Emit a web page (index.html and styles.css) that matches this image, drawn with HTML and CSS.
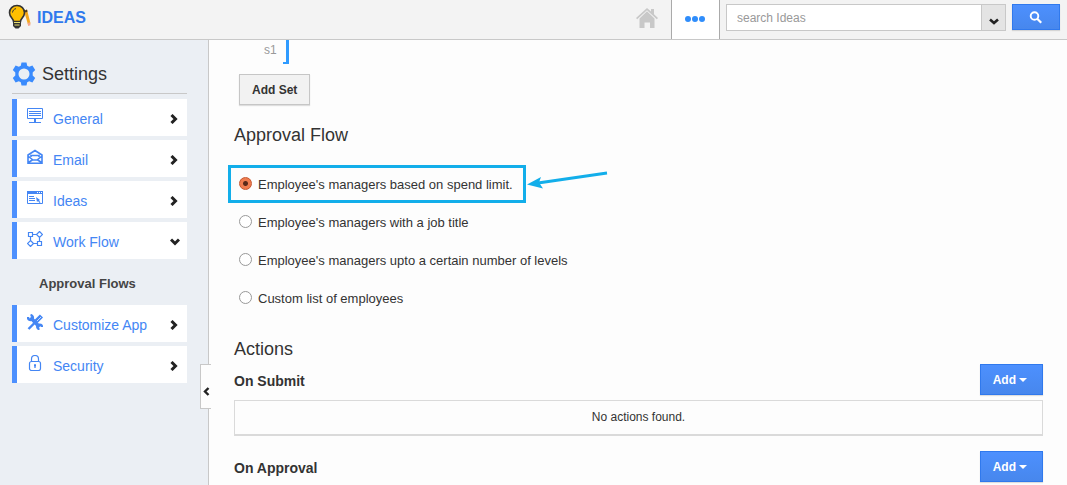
FILE: index.html
```html
<!DOCTYPE html>
<html lang="en">
<head>
    <meta charset="UTF-8">
    <meta name="viewport" content="width=device-width, initial-scale=1.0">
    <title>Ideas - Approval Flows</title>
    <link rel="stylesheet" href="styles.css">
</head>
<body>
    <header class="topbar">
        <a class="brand" href="#">
            <svg class="brand-icon" width="23" height="26" viewBox="0 0 23 26" aria-hidden="true">
                <path d="M16 7l3-1.500 3.500 14-2.500 1z" fill="#f4a71d"/>
                <path d="M16 7l3-1.500.5 2-1.500 1z" fill="#4a3a20"/>
                <path d="M19.500 19l2.600-.8.400 3-2.300.8z" fill="#f5a58c"/>
                <path d="M9 1.500C4.600 1.500 1.500 4.600 1.500 8.800c0 4.400 4 5.700 4 8.700h7c0-3 4-4.300 4-8.700C16.500 4.600 13.400 1.500 9 1.500z" fill="#ffbf00" stroke="#333" stroke-width="1.600"/>
                <path d="M4.500 8.500c.2-2 1.500-3.500 3.500-3.900" fill="none" stroke="#333" stroke-width="1"/>
                <path d="M5 17h8v5l-2.500 2.500h-3L5 22z" fill="#333"/>
                <path d="M6 18.500h6M6.500 21h5" stroke="#e8e070" stroke-width="1.200"/>
            </svg>
            <span>IDEAS</span>
        </a>
        <nav class="top-nav" aria-label="Main">
            <a class="home-link" href="#" aria-label="Home">
                <svg width="22" height="20" viewBox="0 0 22 20" aria-hidden="true">
                    <path d="M0 10L11 0l4 3.600V1h3v5.300l4 3.700-1.200 1.200L11 2.300l-9.800 8.900z" fill="#c8c8c8"/>
                    <path d="M3.500 10.500L11 3.300l7.500 7.200V20H14v-5.500H8.500V20h-5z" fill="#c8c8c8"/>
                </svg>
            </a>
            <button class="more-button" type="button" aria-label="More">
                <svg width="20" height="6" viewBox="0 0 20 6" fill="#2f8dfb" aria-hidden="true">
                    <circle cx="3" cy="3" r="3"/><circle cx="10" cy="3" r="3"/><circle cx="17" cy="3" r="3"/>
                </svg>
            </button>
        </nav>
        <form class="search" role="search">
            <input class="search-input" type="text" placeholder="search Ideas" aria-label="search Ideas">
            <button class="search-scope" type="button" aria-label="Search options">
                <svg width="10" height="7" viewBox="0 0 10 7" aria-hidden="true"><path d="M1 1.500l4 3.500 4-3.500" fill="none" stroke="#222" stroke-width="2.600"/></svg>
            </button>
            <button class="button button-blue search-button" type="submit" aria-label="Search">
                <svg width="14" height="13" viewBox="0 0 14 13" fill="none" stroke="#fff" aria-hidden="true">
                    <circle cx="5.500" cy="5" r="3.800" stroke-width="1.900"/><path d="M8.200 7.700l4 4" stroke-width="2.200"/>
                </svg>
            </button>
        </form>
    </header>

    <div class="page">
        <aside class="sidebar">
            <h2 class="sidebar-title">
                <svg width="24" height="24" viewBox="0 0 24 24" aria-hidden="true">
                    <path fill="#3a8bfd" fill-rule="evenodd" d="M9.500.5h5l.7 3.200 2 1.100 3.200-1.300 2.800 4.500-2.500 2.500v3l2.500 2.500-2.800 4.500-3.200-1.300-2 1.100-.7 3.200h-5l-.7-3.200-2-1.100-3.200 1.300L.8 16l2.500-2.500v-3L.8 8l2.800-4.500 3.200 1.300 2-1.100zM12 6.500a5.500 5.500 0 1 0 0 11 5.500 5.500 0 0 0 0-11z"/>
                </svg>
                <span>Settings</span>
            </h2>
            <nav class="menu" aria-label="Settings">
                <a class="menu-item" href="#">
                    <svg class="menu-icon" width="16" height="16" viewBox="0 0 16 16" aria-hidden="true"><path d="M.5.500h15v10H.500zM2 3.500h12M2 5.500h12M2 7.500h12M2 14.500h12"/><path d="M8 10.500v4" stroke-width="2"/></svg>
                    <span>General</span>
                    <svg class="chevron" width="8" height="10" viewBox="0 0 8 10" aria-hidden="true"><path d="M1.500 1l4 4-4 4"/></svg>
                </a>
                <a class="menu-item" href="#">
                    <svg class="menu-icon" width="16" height="16" viewBox="0 0 16 16" aria-hidden="true"><path d="M1 6l7-4.500L15 6v8.200H1zM1 7l5 4h4l5-4M1.500 13.500L6 10.500M14.500 13.500L10 10.500M4 8V6.500h8V8" stroke-width="1.600"/></svg>
                    <span>Email</span>
                    <svg class="chevron" width="8" height="10" viewBox="0 0 8 10" aria-hidden="true"><path d="M1.500 1l4 4-4 4"/></svg>
                </a>
                <a class="menu-item" href="#">
                    <svg class="menu-icon" width="16" height="16" viewBox="0 0 16 16" aria-hidden="true"><path d="M.5 1.500h15v12H.500z"/><path d="M0 2.500h16" stroke-width="3"/><path d="M10 2.500h1M12 2.500h1M14 2.500h1" stroke="#fff"/><path d="M2 6.500h5M2 8.500h6M2 10.500h6"/><path d="M9 7l4 3-1 .5 1.500 2-1 .5-1.500-2-1 1z" fill="#4486f4" stroke="none"/></svg>
                    <span>Ideas</span>
                    <svg class="chevron" width="8" height="10" viewBox="0 0 8 10" aria-hidden="true"><path d="M1.500 1l4 4-4 4"/></svg>
                </a>
                <a class="menu-item" href="#" aria-expanded="true">
                    <svg class="menu-icon" width="16" height="16" viewBox="0 0 16 16" aria-hidden="true"><path d="M1.500 1.500h4v4h-4zM10.500 10.500h4v4h-4zM12.500.500l3 3-3 3-3-3zM3.500 9.500l3 3-3 3-3-3zM6 3.500h3M3.500 6v3M7 12.500h3M12.500 7v3" stroke-width="1.200"/></svg>
                    <span>Work Flow</span>
                    <svg class="chevron" width="10" height="8" viewBox="0 0 10 8" aria-hidden="true"><path d="M1 1.500l4 4 4-4"/></svg>
                </a>
                <a class="submenu-item" href="#">Approval Flows</a>
                <a class="menu-item" href="#">
                    <svg class="menu-icon" width="16" height="16" viewBox="0 0 16 16" aria-hidden="true"><path d="M3.500 3.500l9 9.500" stroke-width="3.600"/><path d="M1 3c0 3 2 3.500 4 2.500C6.500 4 6 1.500 3.500 1" stroke-width="2.400"/><path d="M15 13c0-2-2-3-4-2-1.500 1.500-.5 4 1.500 4" stroke-width="2.400"/><path d="M14.500 2L9 7.500" stroke-width="4.400"/><path d="M14 3L10 7" stroke="#fff" stroke-width=".7"/><path d="M8.500 8L1.500 15" stroke-width="2.400"/></svg>
                    <span>Customize App</span>
                    <svg class="chevron" width="8" height="10" viewBox="0 0 8 10" aria-hidden="true"><path d="M1.500 1l4 4-4 4"/></svg>
                </a>
                <a class="menu-item" href="#">
                    <svg class="menu-icon" width="16" height="16" viewBox="0 0 16 16" aria-hidden="true"><rect x="2.500" y="6.500" width="11" height="9" rx="2" stroke-width="1.200"/><path d="M4.500 6.500V4a3.500 3.500 0 0 1 7 0v2.500" stroke-width="1.200"/><path d="M8 9v4M7 10.500h2" stroke-width="1.300"/></svg>
                    <span>Security</span>
                    <svg class="chevron" width="8" height="10" viewBox="0 0 8 10" aria-hidden="true"><path d="M1.500 1l4 4-4 4"/></svg>
                </a>
            </nav>
            <button class="collapse-tab" type="button" aria-label="Collapse sidebar">
                <svg width="7" height="9" viewBox="0 0 7 9" aria-hidden="true"><path d="M5.500 1L2 4.500 5.500 8" fill="none" stroke="#222" stroke-width="2.400"/></svg>
            </button>
        </aside>

        <main class="content">
            <div class="set-row">
                <span>s1</span>
                <span class="set-bracket"></span>
            </div>
            <button class="button add-set" type="button">Add Set</button>

            <fieldset class="flow">
                <legend class="section-title">Approval Flow</legend>
                <div class="flow-option">
                    <input type="radio" name="flow" id="flow-limit" checked>
                    <label for="flow-limit">Employee's managers based on spend limit.</label>
                    <span class="highlight"></span>
                    <svg class="arrow" width="82" height="20" viewBox="0 0 82 20" aria-hidden="true">
                        <path d="M11 13L80 3" fill="none" stroke="#12aeea" stroke-width="3"/>
                        <path d="M0 14.500L14 7l-2 5.500 4 6z" fill="#12aeea"/>
                    </svg>
                </div>
                <div class="flow-option">
                    <input type="radio" name="flow" id="flow-title">
                    <label for="flow-title">Employee's managers with a job title</label>
                </div>
                <div class="flow-option">
                    <input type="radio" name="flow" id="flow-levels">
                    <label for="flow-levels">Employee's managers upto a certain number of levels</label>
                </div>
                <div class="flow-option">
                    <input type="radio" name="flow" id="flow-custom">
                    <label for="flow-custom">Custom list of employees</label>
                </div>
            </fieldset>

            <h2 class="section-title">Actions</h2>
            <section class="action">
                <div class="action-head">
                    <h3>On Submit</h3>
                    <button class="button button-blue add-button" type="button">Add<span class="caret"></span></button>
                </div>
                <p class="action-empty">No actions found.</p>
            </section>
            <section class="action">
                <div class="action-head">
                    <h3>On Approval</h3>
                    <button class="button button-blue add-button" type="button">Add<span class="caret"></span></button>
                </div>
            </section>
        </main>
    </div>
</body>
</html>
```
FILE: styles.css
```css
* {
    box-sizing: border-box;
}

body {
    display: flex;
    flex-direction: column;
    height: 100vh;
    margin: 0;
    overflow: hidden;
    background: #fdfdfd;
    color: #333;
    font-family: "Liberation Sans", Arial, sans-serif;
    font-size: 13px;
}

a {
    text-decoration: none;
}

h2,
h3,
p {
    margin: 0;
}

svg {
    flex-shrink: 0;
}

button,
input {
    font-family: inherit;
}

/* Top bar */
.topbar {
    display: flex;
    flex-shrink: 0;
    height: 40px;
    background: #f3f3f3;
    border-bottom: 1px solid #c8c8c8;
}

.brand {
    display: flex;
    gap: 6px;
    margin-right: auto;
    padding: 4px 0 0 8px;
    color: #3079ed;
    font-size: 16px;
    font-weight: bold;
    line-height: 28px;
}

.top-nav {
    display: flex;
}

.home-link {
    padding: 8px 13px 0;
}

.more-button {
    width: 49px;
    padding: 0 2px 4px 0;
    background: #fff;
    border: solid #aaa;
    border-width: 0 1px;
}

.search {
    display: flex;
    align-items: flex-start;
    padding: 4px 7px 0 6px;
}

.search-input {
    width: 255px;
    height: 27px;
    padding: 0 10px;
    background: #fff;
    border: 1px solid #c8c8c8;
    border-right: 0;
    font-size: 12px;
}

.search-input::placeholder {
    color: #999;
}

.search-scope {
    width: 25px;
    height: 27px;
    padding: 6px 0 0;
    background: #e4e4e4;
    border: 1px solid #c8c8c8;
}

/* Buttons */
.button {
    background: #f2f2f2;
    border: 1px solid #c6c6c6;
    box-shadow: 0 1px 1px rgba(0, 0, 0, 0.12);
    color: #333;
    font-size: 12px;
    font-weight: bold;
}

.button-blue {
    background: linear-gradient(#4d90fe, #4787ed);
    border-color: #3079ed;
    color: #fff;
}

.search-button {
    display: flex;
    align-items: center;
    justify-content: center;
    width: 48px;
    height: 26px;
    margin-left: 6px;
    padding: 0;
}

/* Sidebar */
.page {
    display: flex;
    flex: 1;
    min-height: 0;
}

.sidebar {
    position: relative;
    flex: 0 0 209px;
    padding: 20px 21px 0 12px;
    background: #ebeff4;
    border-right: 1px solid #c8c8c8;
}

.sidebar-title {
    display: flex;
    align-items: center;
    gap: 6px;
    height: 34px;
    padding-bottom: 5px;
    border-bottom: 1px solid #c8c8c8;
    font-size: 18px;
    font-weight: normal;
}

.menu {
    display: flex;
    flex-direction: column;
    gap: 4px;
    padding-top: 5px;
}

.menu-item {
    display: flex;
    align-items: center;
    gap: 10px;
    height: 37px;
    padding: 2px 9px 0 10px;
    background: #fff;
    border-left: 5px solid #4d90fe;
    color: #4486f4;
    font-size: 14px;
}

.menu-icon {
    margin-bottom: 5px;
    fill: none;
    stroke: #4486f4;
}

.chevron {
    margin-left: auto;
    fill: none;
    stroke: #222;
    stroke-width: 3px;
}

.menu-item[aria-expanded="true"] {
    padding-right: 7px;
}

.submenu-item {
    padding: 4px 0 0 27px;
    color: #444;
    font-weight: bold;
    line-height: 34px;
}

.collapse-tab {
    position: absolute;
    right: -3px;
    bottom: 76px;
    width: 11px;
    height: 45px;
    padding: 10px 0 0;
    background: #fdfdfd;
    border: 1px solid #c8c8c8;
    border-right: 0;
    line-height: 9px;
}

/* Content */
.content {
    flex: 1;
    padding: 0 24px 0 25px;
    overflow: hidden;
}

.set-row {
    display: flex;
    gap: 6px;
    height: 24px;
    padding-left: 30px;
    color: #999;
    font-size: 12px;
    line-height: 20px;
}

.set-bracket {
    width: 6px;
    border: solid #2f9bff;
    border-width: 0 3px 2px 0;
}

.add-set {
    height: 31px;
    margin: 10px 0 0 5px;
    padding: 0 12px;
}

.section-title {
    padding: 0;
    font-size: 18px;
    font-weight: normal;
    line-height: 24px;
}

.flow {
    margin: 18px 0 20px;
    padding: 18px 0 0;
    border: 0;
}

.flow-option {
    position: relative;
    display: flex;
    gap: 6px;
    height: 38px;
    padding-left: 5px;
    line-height: 40px;
}

.flow-option input {
    width: 13px;
    height: 13px;
    margin: 12px 0 0;
    appearance: none;
    background: #fff;
    border: 1px solid #999;
    border-radius: 50%;
}

.flow-option input:checked {
    background: radial-gradient(circle, #5a2a1a 2px, #ef7d50 3px);
    border-color: #c5562f;
}

.highlight {
    position: absolute;
    top: 0;
    left: -6px;
    width: 298px;
    height: 38px;
    border: 3px solid #12aeea;
    pointer-events: none;
}

.arrow {
    position: absolute;
    top: 5px;
    left: 293px;
}

.action {
    padding-top: 3px;
    margin-bottom: 12px;
}

.action-head {
    display: flex;
    justify-content: space-between;
    height: 36px;
}

.action-head h3 {
    font-size: 14px;
    line-height: 34px;
}

.add-button {
    display: flex;
    align-items: center;
    gap: 3px;
    height: 31px;
    padding: 0 15px 0 12px;
}

.caret {
    border: 4px solid transparent;
    border-bottom: 0;
    border-top-color: #fff;
}

.action-empty {
    border: 1px solid #dadada;
    border-bottom-width: 2px;
    font-size: 12px;
    line-height: 33px;
    text-align: center;
}
```
